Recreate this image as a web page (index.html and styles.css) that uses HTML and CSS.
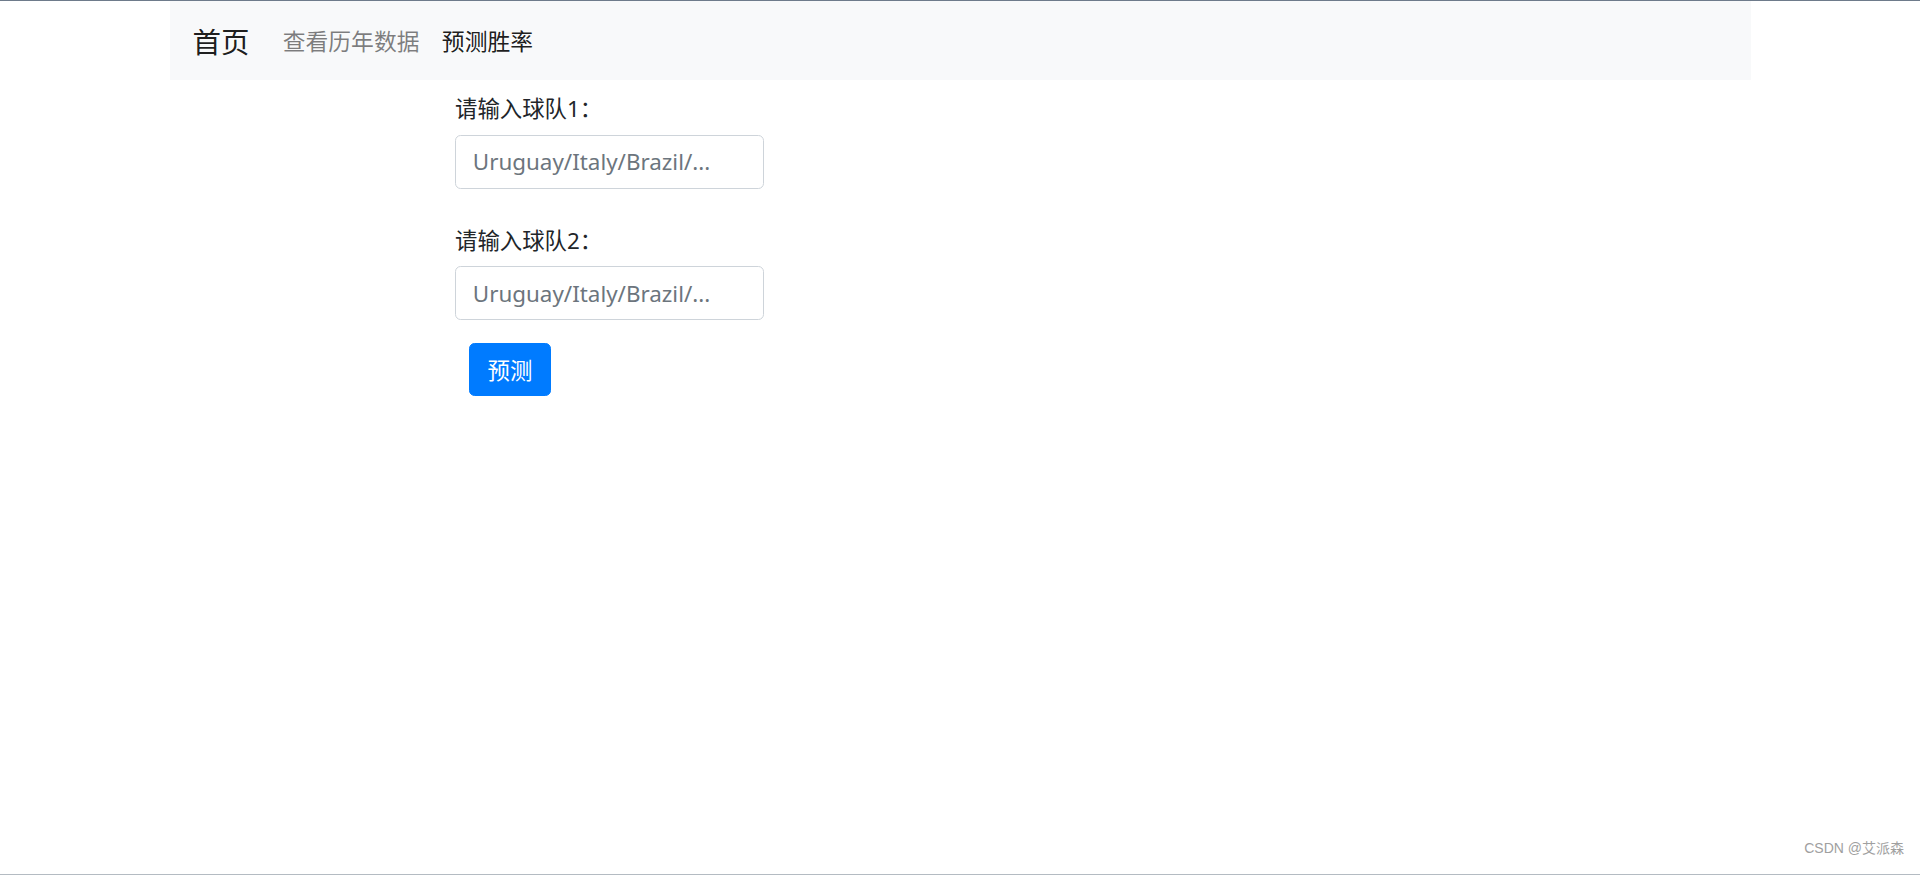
FILE: index.html
```html
<!DOCTYPE html>
<html lang="zh">
<head>
  <meta charset="UTF-8">
  <title>预测胜率</title>
  <link rel="stylesheet" href="styles.css">
</head>
<body>
  <div class="page">
    <nav class="navbar">
      <a class="brand" href="#">首页</a>
      <a class="nav-link" href="#">查看历年数据</a>
      <a class="nav-link active" href="#">预测胜率</a>
    </nav>

    <form class="predict-form">
      <div class="form-group">
        <label for="team1">请输入球队1：</label>
        <input type="text" id="team1" class="form-control" placeholder="Uruguay/Italy/Brazil/...">
      </div>
      <div class="form-group">
        <label for="team2">请输入球队2：</label>
        <input type="text" id="team2" class="form-control" placeholder="Uruguay/Italy/Brazil/...">
      </div>
      <button type="button" class="btn">预测</button>
    </form>

    <div class="watermark">CSDN @艾派森</div>
  </div>
</body>
</html>
```

FILE: styles.css
```css
body {
  margin: 0;
  font-family: "Noto Sans", "Noto Sans CJK SC", sans-serif;
  color: #212529;
  background: #fff;
}

.page {
  position: relative;
  height: 875px;
  box-sizing: border-box;
  border-top: 1px solid #6e7b8b;
  border-bottom: 1px solid #b4bbc2;
}

.navbar {
  width: 1581px;
  height: 79px;
  margin: 0 auto;
  padding: 4px 23px 0;
  box-sizing: border-box;
  background: #f8f9fa;
  display: flex;
  align-items: center;
}

.navbar a {
  text-decoration: none;
}

.brand {
  font-size: 28.5px;
  line-height: 1.5;
  color: rgba(0, 0, 0, 0.9);
  margin-right: 22px;
}

.nav-link {
  font-size: 22.8px;
  line-height: 1.5;
  padding: 0 11.2px;
  color: rgba(0, 0, 0, 0.5);
}

.nav-link.active {
  color: rgba(0, 0, 0, 0.9);
}

.predict-form {
  margin: 0 0 0 455px;
  padding-top: 12px;
}

.form-group {
  margin-bottom: 35px;
}

.form-group + .form-group {
  margin-bottom: 23px;
}

label {
  display: block;
  font-size: 22.4px;
  line-height: 33.6px;
  margin-bottom: 9px;
  color: #212529;
}

.form-control {
  display: block;
  width: 309px;
  height: 54px;
  box-sizing: border-box;
  padding: 0 16.8px;
  font-family: inherit;
  font-size: 22.4px;
  color: #495057;
  border: 1px solid #ced4da;
  border-radius: 5.6px;
  background: #fff;
}

.form-control::placeholder {
  color: #6c757d;
}

.btn {
  margin-left: 14px;
  width: 82px;
  height: 53px;
  padding: 0;
  font-family: inherit;
  font-size: 22.4px;
  color: #fff;
  background: #007bff;
  border: 1px solid #007bff;
  border-radius: 5.6px;
  cursor: pointer;
}

.watermark {
  position: absolute;
  right: 16px;
  bottom: 17px;
  font-family: "Liberation Sans", "Noto Sans CJK SC", sans-serif;
  font-size: 14px;
  color: #a0a0a0;
}
```
